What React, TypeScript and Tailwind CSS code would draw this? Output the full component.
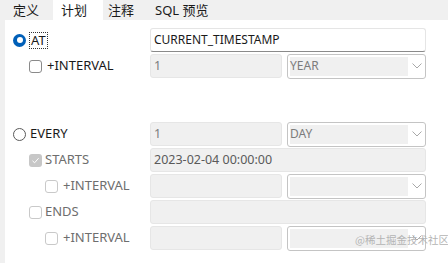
import React from "react";

const font = { fontFamily: '"Noto Sans", "Noto Sans CJK SC", sans-serif' };

function Radio({ checked }: { checked?: boolean }) {
  return checked ? (
    <span className="inline-flex h-[13px] w-[13px] shrink-0 items-center justify-center rounded-full bg-[#005fb8]">
      <span className="h-[6px] w-[6px] rounded-full bg-white" />
    </span>
  ) : (
    <span className="inline-block h-[13px] w-[13px] shrink-0 rounded-full border border-[#5a5a5a] bg-white" />
  );
}

function Check({ disabled, checked }: { disabled?: boolean; checked?: boolean }) {
  if (checked) {
    return (
      <span className="inline-flex h-[13px] w-[13px] shrink-0 items-center justify-center rounded-[3px] bg-[#c7c7c7]">
        <svg width="9" height="9" viewBox="0 0 9 9" fill="none">
          <path d="M1.5 4.8 L3.6 6.8 L7.6 2.2" stroke="#fff" strokeWidth="1" />
        </svg>
      </span>
    );
  }
  return (
    <span
      className={
        "inline-block h-[13px] w-[13px] shrink-0 rounded-[3px] border bg-white " +
        (disabled ? "border-[#c9c9c9]" : "border-[#8a8a8a]")
      }
    />
  );
}

function DisInput({ value, wide }: { value?: string; wide?: boolean }) {
  return (
    <div
      className={
        "flex h-6 items-center rounded-[3px] border border-[#e6e6e6] bg-[#f0f0f0] pl-[3px] text-[12.5px] text-[#7c7c7c] " +
        (wide ? "w-[276px]" : "w-[132px]")
      }
    >
      {value}
    </div>
  );
}

function Select({ value }: { value?: string }) {
  return (
    <div className="flex h-[25px] w-[139px] items-center rounded-[3px] border border-[#c4c4c4] bg-white p-[2px]">
      <div className="flex h-full w-[118px] items-center bg-[#f0f0f0] pl-0 text-[12px] text-[#7c7c7c]">
        {value}
      </div>
      <div className="flex flex-1 items-center justify-center pl-[2px]">
        <svg width="10" height="6" viewBox="0 0 10 6" fill="none">
          <path d="M0.5 0.5 L5 5 L9.5 0.5" stroke="#a8a8a8" strokeWidth="1" />
        </svg>
      </div>
    </div>
  );
}

function Row({ children, left, indent }: { children: React.ReactNode; left: React.ReactNode; indent: number }) {
  return (
    <div className="flex h-6 items-center">
      <div
        className={
          "flex w-[145px] shrink-0 items-center " +
          (indent === 0 ? "pl-[8px]" : indent === 1 ? "pl-[24px]" : "pl-[40px]")
        }
      >
        {left}
      </div>
      <div className="flex items-center gap-[5px]">{children}</div>
    </div>
  );
}

export default function App() {
  return (
    <div className="relative h-[263px] w-[448px] overflow-hidden bg-[#f0f0f0] text-[13px] text-[#1a1a1a]" style={font}>
      <div className="flex h-5 items-end text-[13px] text-[#1a1a1a]">
        <div className="flex h-5 w-[53px] items-center pl-[13px] pt-[1px]">定义</div>
        <div className="flex h-5 w-[50px] items-center bg-white pl-[8px] pt-[1px]">计划</div>
        <div className="flex h-5 w-[47px] items-center pl-[5px] pt-[1px]">注释</div>
        <div className="flex h-5 w-[80px] items-center pl-[5px] pt-[1px]">SQL 预览</div>
      </div>
      <div className="ml-[5px] flex h-[243px] flex-col gap-[2px] bg-white pt-[8px]">
        <Row
          indent={0}
          left={
            <>
              <Radio checked />
              <span className="ml-[3px] border border-dotted border-[#333] px-[1px] leading-[15px]">AT</span>
            </>
          }
        >
          <div className="flex h-6 w-[276px] items-center rounded-[3px] border border-[#e5e5e5] border-b-[#8a8a8a] bg-white pl-[3px] text-[12px] text-[#1a1a1a]">
            CURRENT_TIMESTAMP
          </div>
        </Row>
        <Row
          indent={1}
          left={
            <>
              <Check />
              <span className="ml-[5px]">+INTERVAL</span>
            </>
          }
        >
          <DisInput value="1" />
          <Select value="YEAR" />
        </Row>
        <div className="h-[40px]" />
        <Row
          indent={0}
          left={
            <>
              <Radio />
              <span className="ml-[4px]">EVERY</span>
            </>
          }
        >
          <DisInput value="1" />
          <Select value="DAY" />
        </Row>
        <Row
          indent={1}
          left={
            <>
              <Check checked />
              <span className="ml-[3px] text-[#6e6e6e]">STARTS</span>
            </>
          }
        >
          <div className="flex h-6 w-[276px] items-center rounded-[3px] border border-[#e6e6e6] bg-[#f0f0f0] pl-[3px] text-[12.5px] text-[#5a5a5a]">
            2023-02-04 00:00:00
          </div>
        </Row>
        <Row
          indent={2}
          left={
            <>
              <Check disabled />
              <span className="ml-[5px] text-[#6e6e6e]">+INTERVAL</span>
            </>
          }
        >
          <DisInput />
          <Select />
        </Row>
        <Row
          indent={1}
          left={
            <>
              <Check disabled />
              <span className="ml-[3px] text-[#6e6e6e]">ENDS</span>
            </>
          }
        >
          <DisInput wide />
        </Row>
        <Row
          indent={2}
          left={
            <>
              <Check disabled />
              <span className="ml-[5px] text-[#6e6e6e]">+INTERVAL</span>
            </>
          }
        >
          <DisInput />
          <Select />
        </Row>
      </div>
      <div
        className="absolute left-[355px] top-[233px] whitespace-nowrap text-[10.5px] leading-[14px] text-[#b4b4b4]"
        style={{ fontFamily: '"Noto Sans CJK SC", sans-serif' }}
      >
        @稀土掘金技术社区
      </div>
    </div>
  );
}
